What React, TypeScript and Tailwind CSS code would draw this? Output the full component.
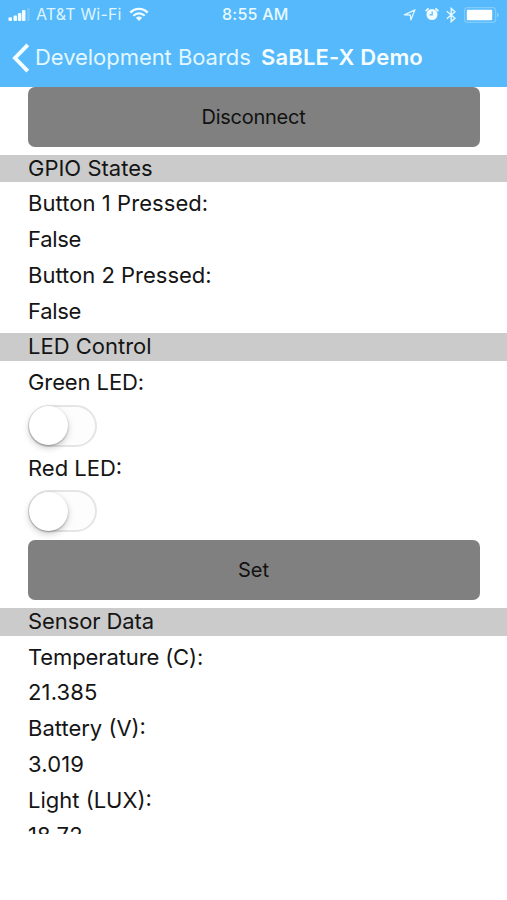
import React from 'react';

interface SectionProps {
  title: string;
  className?: string;
}

const SectionHeader: React.FC<SectionProps> = ({ title, className = '' }) => (
  <div className="h-[27.6px] bg-[#cbcbcb] px-7">
    <h2 className={`whitespace-nowrap ${className}`}>{title}</h2>
  </div>
);

const Row: React.FC<{ text: string; className?: string }> = ({ text, className = '' }) => (
  <p className={`h-[27.6px] shrink-0 px-7 whitespace-nowrap ${className}`}>{text}</p>
);

const ActionButton: React.FC<{ label: string; className?: string }> = ({ label, className = '' }) => (
  <button className={`mx-[27.5px] h-[59.5px] shrink-0 rounded-[7px] bg-[#808080] pt-0.5 text-[20px] text-[#111] ${className}`}>
    {label}
  </button>
);

const Toggle: React.FC<{ label: string }> = ({ label }) => (
  <button
    role="switch"
    aria-checked={false}
    aria-label={label}
    className="ml-[27.5px] flex h-[41.9px] w-[69px] shrink-0 items-center rounded-full border-2 border-[#e5e5e5] bg-[#fdfdfd]"
  >
    <span className="-ml-px h-[39.5px] w-[39.5px] rounded-full bg-white shadow-[0_3px_7px_rgba(0,0,0,0.2),0_1px_2px_rgba(0,0,0,0.28)]" />
  </button>
);

const StatusBar: React.FC = () => (
  <div className="flex h-[29px] items-center">
    <svg width="24" height="14" viewBox="0 0 24 14" className="ml-2 shrink-0" fill="#f4fdff">
      <rect x="0.5" y="9.2" width="3.5" height="3.8" rx="1" />
      <rect x="5.5" y="7.5" width="3.5" height="5.5" rx="1" />
      <rect x="9.9" y="5" width="3.5" height="8" rx="1" />
      <rect x="14" y="2" width="3.5" height="11" rx="1" />
      <rect x="19.2" y="0" width="2.5" height="13" rx="1" opacity="0.2" />
    </svg>
    <span className="ml-1 w-[86px] text-[16px] tracking-[0.15px] whitespace-nowrap text-[#def5ff]">AT&amp;T Wi-Fi</span>
    <svg width="20" height="15" viewBox="0 0 20 15" className="ml-[7px] shrink-0" fill="none" stroke="#f0fcff">
      <path d="M1.3 5.6C6.3.6 13.7.6 18.7 5.6" strokeWidth="2.4" />
      <path d="M4.3 8.7c3.3-3.2 8.1-3.2 11.4 0" strokeWidth="2.2" />
      <path d="M10 14l3.2-3.3c-1.9-1.7-4.5-1.7-6.4 0z" fill="#f0fcff" stroke="none" />
    </svg>
    <span className="ml-[73px] w-[70px] text-[16px] font-medium tracking-[0.25px] whitespace-nowrap text-[#e8faff]">8:55 AM</span>
    <svg width="14" height="14" viewBox="0 0 14 14" className="ml-[111px] shrink-0" fill="none" stroke="#dff6ff" strokeWidth="1.3" strokeLinejoin="round">
      <path d="M1.3 6.8 12 1.8 7.9 11.8 7.3 7z" />
    </svg>
    <svg width="14" height="15" viewBox="0 0 14 15" className="ml-[8px] shrink-0">
      <path d="M1.2 3.6 3 1.9M12.8 3.6 11 1.9" stroke="#f0fcff" strokeWidth="1.8" strokeLinecap="round" />
      <circle cx="7" cy="7.5" r="5.5" fill="#f0fcff" />
      <path d="M7.2 4.6v3.3H4.6" fill="none" stroke="#55b9fb" strokeWidth="1.2" />
    </svg>
    <svg width="10" height="16" viewBox="0 0 10 16" className="ml-[7px] shrink-0" fill="none" stroke="#e8faff" strokeWidth="1.4">
      <path d="M.8 4.2 9 11.2 5.2 14.6V1.4L9 4.8.8 11.8" />
    </svg>
    <svg width="36" height="16" viewBox="0 0 36 16" className="ml-[8px] shrink-0">
      <rect x="0.6" y="0.6" width="31" height="14.8" rx="3" fill="none" stroke="#80cdfd" strokeWidth="1.1" />
      <rect x="2.8" y="2.7" width="25.4" height="10.6" rx="1" fill="#fff" />
      <path d="M33 5.5c2.3.8 2.3 4.2 0 5z" fill="#8cd2fd" />
    </svg>
  </div>
);

const App: React.FC = () => {
  return (
    <div className="h-[900px] w-[507px] overflow-hidden bg-white font-['Inter',sans-serif] text-[22px] leading-[27.6px] text-[#151515]">
      <header className="h-[87px] bg-[#55b9fb]">
        <StatusBar />
        <nav className="flex h-[58px] items-center">
          <svg width="18" height="30" viewBox="0 0 18 30" className="ml-3 shrink-0" fill="none" stroke="#f4fdff" strokeWidth="3.9">
            <path d="M15.8 1.8 3 15l12.8 13.2" />
          </svg>
          <span className="ml-[5px] w-[226px] tracking-[-0.05px] whitespace-nowrap text-[#e2f7ff]">Development Boards</span>
          <h1 className="font-semibold tracking-[0.15px] whitespace-nowrap text-[#f5fdff]">SaBLE-X Demo</h1>
        </nav>
      </header>

      <main className="flex h-[746.5px] flex-col gap-[8.13px] overflow-hidden">
        <ActionButton label="Disconnect" className="tracking-[-0.25px]" />
        <SectionHeader title="GPIO States" />
        <Row text="Button 1 Pressed:" className="tracking-[0.06px]" />
        <Row text="False" className="tracking-[-0.3px]" />
        <Row text="Button 2 Pressed:" />
        <Row text="False" className="tracking-[-0.3px]" />
        <SectionHeader title="LED Control" />
        <Row text="Green LED:" className="tracking-[-0.1px]" />
        <Toggle label="Green LED" />
        <Row text="Red LED:" />
        <Toggle label="Red LED" />
        <ActionButton label="Set" />
        <SectionHeader title="Sensor Data" className="tracking-[-0.1px]" />
        <Row text="Temperature (C):" className="tracking-[-0.12px]" />
        <Row text="21.385" className="tracking-[0.15px]" />
        <Row text="Battery (V):" />
        <Row text="3.019" className="tracking-[0.15px]" />
        <Row text="Light (LUX):" />
        <Row text="18.72" className="tracking-[0.15px]" />
      </main>
    </div>
  );
};

export default App;
